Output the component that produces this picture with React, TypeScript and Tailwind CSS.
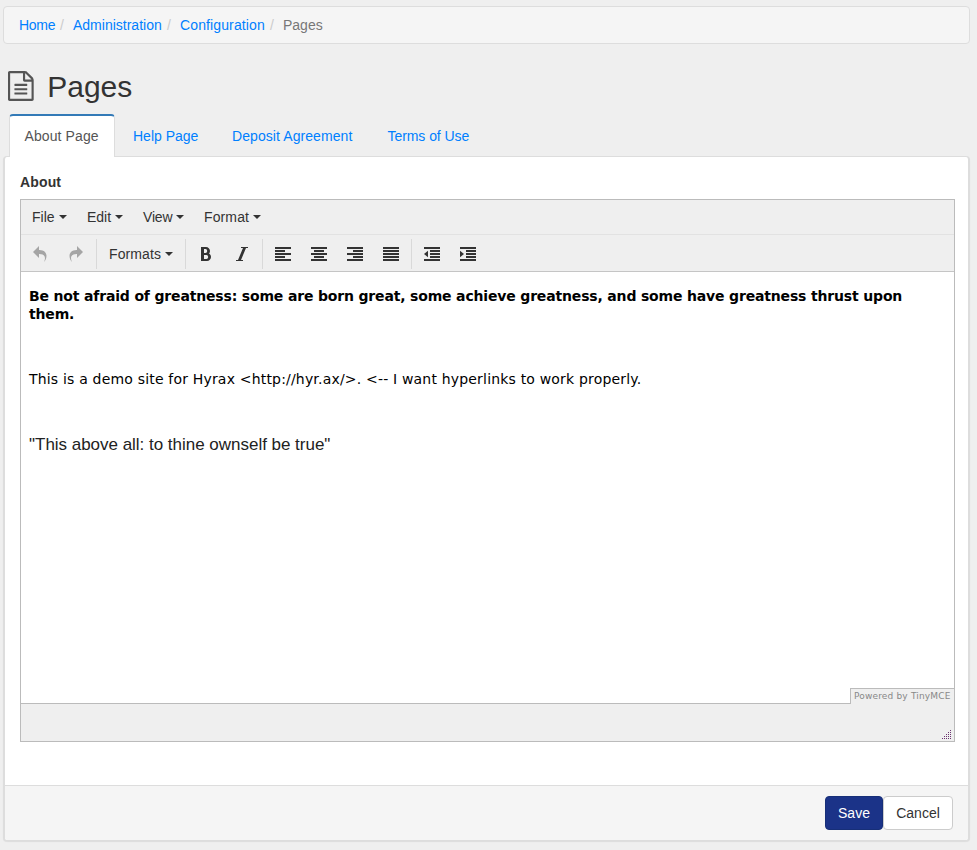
import React from "react";

const links = [
  { label: "Home", cell: "w-[54px]", text: "w-[41px] tracking-[-0.3px]" },
  { label: "Administration", cell: "w-[107px]", text: "w-[94px]" },
  { label: "Configuration", cell: "w-[103px]", text: "w-[90px] tracking-[0.12px]" },
];

function Caret({ className = "" }: { className?: string }) {
  return (
    <svg className={`shrink-0 ${className}`} width="8" height="4" viewBox="0 0 8 4" fill="#333">
      <path d="M0 0h8L4 4z" />
    </svg>
  );
}

function Glyph({ d, color = "#333", flip = false }: { d: string; color?: string; flip?: boolean }) {
  return (
    <svg width="16" height="16" viewBox="0 0 1024 1024" fill={color} className={flip ? "-scale-x-100" : ""}>
      <path d={d} />
    </svg>
  );
}

const UNDO =
  "M761.862 1024c113.726-206.032 132.888-520.306-313.862-509.824v253.824l-384-384 384-384v248.372c534.962-13.942 594.57 472.214 313.862 775.628z";
const BOLD =
  "M707.88 484.652c37.498-44.542 60.12-102.008 60.12-164.652 0-141.16-114.842-256-256-256h-320v896h384c141.158 0 256-114.842 256-256 0-92.956-49.798-174.496-124.12-219.348zM384 192h101.5c55.968 0 101.5 57.42 101.5 128s-45.532 128-101.5 128h-101.5v-256zM543 832h-159v-256h159c58.45 0 106 57.42 106 128s-47.55 128-106 128z";
const ITALIC = "M896 64v64h-128l-320 768h128v64h-448v-64h128l320-768h-128v-64z";

function Lines({ rows, arrow }: { rows: number[][]; arrow?: string }) {
  return (
    <svg width="16" height="16" viewBox="0 0 16 16" fill="#333">
      {rows.map(([x, w], i) => (
        <rect key={i} x={x} y={1 + i * 3} width={w} height="2" />
      ))}
      {arrow && <path d={arrow} />}
    </svg>
  );
}

const full = [0, 16];
const indentRows = [full, [6, 10], [6, 10], [6, 10], full];

function Separator() {
  return <div className="mx-3 h-[30px] w-px shrink-0 bg-[#d9d9d9]" />;
}

function Menu({ label, width }: { label: string; width: string }) {
  return (
    <div className={`flex items-center justify-between ${width}`}>
      <span>{label}</span>
      <Caret />
    </div>
  );
}

export default function App() {
  return (
    <div className="h-[850px] w-[977px] overflow-hidden bg-[#efefef] pt-[6px] pl-[3px] font-['Liberation_Sans',Arial,sans-serif] text-[14px] leading-5 text-[#333]">
      <nav className="flex h-[38px] w-[967px] items-center rounded border border-[#ddd] bg-[#f5f5f5] pl-[15px]">
        {links.map((l) => (
          <div key={l.label} className={`flex ${l.cell}`}>
            <a className={`text-[#007fff] ${l.text}`}>{l.label}</a>
            <span className="text-[#ccc]">/</span>
          </div>
        ))}
        <span className="text-[#777]">Pages</span>
      </nav>

      <h1 className="mt-[26px] flex h-[33px] items-center pl-[5px] text-[30px] leading-[33px]">
        <svg width="25.7" height="30" viewBox="128 0 1536 1792" fill="#555" className="mt-[-1px]">
          <path d="M1596 380q28 28 48 76t20 88v1152q0 40-28 68t-68 28h-1344q-40 0-68-28t-28-68v-1600q0-40 28-68t68-28h896q40 0 88 20t76 48zm-444-244v376h376q-10-29-22-41l-313-313q-12-12-41-22zm384 1528v-1024h-416q-40 0-68-28t-28-68v-416h-768v1536h1280zm-1024-864q0-14 9-23t23-9h704q14 0 23 9t9 23v64q0 14-9 23t-23 9h-704q-14 0-23-9t-9-23v-64zm736 224q14 0 23 9t9 23v64q0 14-9 23t-23 9h-704q-14 0-23-9t-9-23v-64q0-14 9-23t23-9h704zm0 256q14 0 23 9t9 23v64q0 14-9 23t-23 9h-704q-14 0-23-9t-9-23v-64q0-14 9-23t23-9h704z" />
        </svg>
        <span className="ml-[13.5px]">Pages</span>
      </h1>

      <div className="relative z-10 mt-[11px] flex h-[43px] pl-[6px] text-[#007fff]">
        <div className="w-[106px] rounded-t border-x border-t-2 border-[#ddd] border-t-[#337ab7] bg-white pt-[10px] pl-[14.5px] tracking-[0.1px] text-[#555]">About Page</div>
        <a className="ml-[18px] w-[99px] pt-3">Help Page</a>
        <a className="w-[155.5px] pt-3 tracking-[0.08px]">Deposit Agreement</a>
        <a className="pt-3 tracking-[-0.06px]">Terms of Use</a>
      </div>

      <main className="-mt-px flex h-[685px] w-[967px] flex-col overflow-hidden rounded border-x-2 border-t border-b border-[#ddd] bg-white shadow-[0_1px_1px_rgba(0,0,0,0.08)]">
        <div className="h-[628px] px-[15px] pt-[15px]">
          <div className="h-[27px] font-bold tracking-[0.15px]">About</div>
          <div className="flex h-[543px] w-[935px] flex-col border border-[#bbb]">
            <div className="flex h-[35px] items-center border-b border-[#e2e2e2] bg-[#efefef] pl-[11px]">
              <Menu label="File" width="w-[35px] mr-[20px]" />
              <Menu label="Edit" width="w-[36px] mr-[20px]" />
              <Menu label="View" width="w-[41px] mr-[20px] tracking-[-0.2px]" />
              <Menu label="Format" width="w-[57px] tracking-[0.12px]" />
            </div>
            <div className="flex h-[37px] items-center border-b border-[#c5c5c5] bg-[#efefef] pt-[2px] pl-[11px]">
              <Glyph d={UNDO} color="#a5a5a5" />
              <div className="w-5" />
              <Glyph d={UNDO} color="#a5a5a5" flip />
              <Separator />
              <Menu label="Formats" width="w-[64px] tracking-[0.1px]" />
              <Separator />
              <Glyph d={BOLD} />
              <div className="w-5" />
              <Glyph d={ITALIC} />
              <Separator />
              <div className="flex gap-5">
                <Lines rows={[full, [0, 10], full, [0, 10], full]} />
                <Lines rows={[full, [3, 10], full, [3, 10], full]} />
                <Lines rows={[full, [6, 10], full, [6, 10], full]} />
                <Lines rows={[full, full, full, full, full]} />
              </div>
              <Separator />
              <div className="flex gap-5">
                <Lines rows={indentRows} arrow="M4 4.8v6.4L0 8z" />
                <Lines rows={indentRows} arrow="M0 4.8v6.4L4 8z" />
              </div>
            </div>
            <div className="relative h-[431px] bg-white px-2 pt-[15px] text-black">
              <p className="h-[83px] font-['DejaVu_Sans',Verdana,sans-serif] text-[14px] leading-[18px] font-bold tracking-[-0.168px]">
                Be not afraid of greatness: some are born great, some achieve greatness, and some have greatness thrust upon<br />them.
              </p>
              <p className="h-[65px] font-['DejaVu_Sans',Verdana,sans-serif] text-[14px] leading-[18px] tracking-[0.185px]">
                This is a demo site for Hyrax &lt;http://hyr.ax/&gt;. &lt;-- I want hyperlinks to work properly.
              </p>
              <p className="text-[17px] leading-5 tracking-[-0.02px] text-[#222]">"This above all: to thine ownself be true"</p>
              <div className="absolute right-0 -bottom-px h-4 w-[104px] border-t border-l border-[#bbb] bg-[#efefef] pl-[3px] font-['DejaVu_Sans',sans-serif] text-[9px] leading-[14px] tracking-[0.17px] whitespace-nowrap text-[#888]">Powered by TinyMCE</div>
            </div>
            <div className="flex flex-1 items-end justify-end border-t border-[#bbb] bg-[#efefef] pr-[2px] pb-[1px]">
              <svg width="10" height="10" viewBox="0 0 10 10" fill="#6b3570">
                {[0, 1, 2, 3, 4].map((r) =>
                  Array.from({ length: r + 1 }, (_, c) => (
                    <rect key={`${r}-${c}`} x={8 - c * 2} y={r * 2} width="1" height="1" />
                  ))
                )}
              </svg>
            </div>
          </div>
        </div>
        <div className="flex flex-1 justify-end border-t border-[#ddd] bg-[#f5f5f5] pt-[10px] pr-[15px]">
          <button className="h-[34px] w-[58px] rounded border border-[#172f78] bg-[#1b3388] text-white">Save</button>
          <button className="h-[34px] w-[70px] rounded border border-[#ccc] bg-white">Cancel</button>
        </div>
      </main>
    </div>
  );
}
